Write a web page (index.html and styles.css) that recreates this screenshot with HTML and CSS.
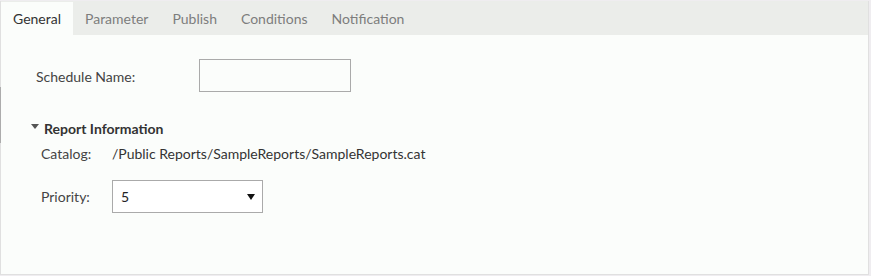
FILE: index.html
```html
<!DOCTYPE html>
<html lang="en">
  <head>
    <meta charset="UTF-8" />
    <meta name="viewport" content="width=device-width, initial-scale=1.0" />
    <title>Schedule</title>
    <link rel="stylesheet" href="styles.css">
  </head>
  <body>
    <div class="panel">
      <ul class="tabs">
        <li class="tab active">General</li>
        <li class="tab">Parameter</li>
        <li class="tab">Publish</li>
        <li class="tab">Conditions</li>
        <li class="tab">Notification</li>
      </ul>

      <div class="content">
        <div class="name-row">
          <label for="scheduleName">Schedule Name:</label>
          <input type="text" id="scheduleName" />
        </div>

        <div class="section-head">
          <svg class="caret" width="8" height="5" viewBox="0 0 8 5">
            <path d="M0 0 H8 L4 5 Z" fill="#555" />
          </svg>
          <span>Report Information</span>
        </div>

        <div class="info-row">
          <span class="info-label">Catalog:</span>
          <span class="info-value">/Public Reports/SampleReports/SampleReports.cat</span>
        </div>

        <div class="info-row priority-row">
          <span class="info-label">Priority:</span>
          <div class="select">
            <span>5</span>
            <svg width="8" height="6" viewBox="0 0 8 6">
              <path d="M0 0 H8 L4 6 Z" fill="#111" />
            </svg>
          </div>
        </div>
      </div>
    </div>
  </body>
</html>
```

FILE: styles.css
```css
* {
  margin: 0px;
  padding: 0px;
  box-sizing: border-box;
}
body {
  background-color: #efedf0;
  font-family: Lato, "Liberation Sans", sans-serif;
  font-size: 14px;
  color: #444;
}

.panel {
  position: relative;
  width: 869px;
  height: 274px;
  margin-top: 1px;
  background-color: #fbfdfb;
  border-left: 1px solid #e0e0e0;
  border-right: 1px solid #e0e0e0;
  border-bottom: 1px solid #e0e0e0;
}

/* splitter handle on the left edge */
.panel::before {
  content: "";
  position: absolute;
  left: -1px;
  top: 86px;
  width: 1px;
  height: 56px;
  background-color: #acacac;
}

.tabs {
  display: flex;
  list-style: none;
  height: 34px;
  background-color: #ebedea;
}

.tab {
  padding: 1px 12px 0;
  line-height: 33px;
  color: #7d7d7d;
}

.tab.active {
  margin-top: 1px;
  padding-top: 0;
  background-color: #fbfdfb;
  color: #333;
}

.content {
  padding-top: 24px;
}

.name-row {
  display: flex;
  align-items: center;
  height: 33px;
  padding-left: 35px;
}

.name-row label {
  width: 163px;
  padding-top: 2px;
}

.name-row input {
  width: 152px;
  height: 33px;
  border: 1px solid #aaa;
  background-color: #fbfdfb;
}

.section-head {
  display: flex;
  align-items: center;
  gap: 5px;
  margin-top: 26px;
  padding-left: 30px;
  height: 20px;
  font-weight: bold;
  color: #333;
}

.caret {
  margin-top: -3px;
}

.info-row {
  display: flex;
  align-items: center;
  height: 20px;
  margin-top: 5px;
  padding-left: 40px;
}

.info-label {
  width: 71px;
}

.info-value {
  color: #333;
}

.priority-row {
  height: 33px;
  margin-top: 17px;
}

.select {
  display: flex;
  align-items: center;
  justify-content: space-between;
  width: 151px;
  height: 33px;
  padding: 0 7px 0 8px;
  border: 1px solid #aaa;
  background-color: #fff;
  color: #222;
}
```
